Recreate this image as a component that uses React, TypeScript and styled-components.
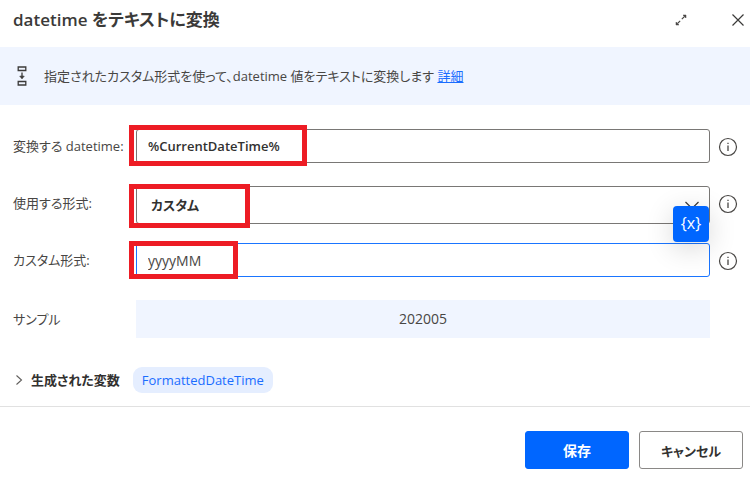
import React from "react";
import styled, { createGlobalStyle, css } from "styled-components";

const GlobalStyle = createGlobalStyle`
  *, *::before, *::after { box-sizing: border-box; }
  html, body { margin: 0; background: #fff; }
  body, button, input, select {
    font-family: "Open Sans", "Noto Sans CJK JP", sans-serif;
    font-feature-settings: "palt";
    font-size: 13px;
    color: #484644;
  }
  button { cursor: pointer; }
`;

const Dialog = styled.main`
  min-height: 100vh;
  background: #fff;
`;

const Header = styled.header`
  display: flex;
  align-items: center;
  justify-content: space-between;
  height: 47px;
  padding: 0 0 8px 13px;
`;

const Title = styled.h1`
  margin: 0;
  font-size: 17px;
  line-height: 26px;
  font-weight: 600;
  color: #3b3a39;
`;

const WindowActions = styled.div`
  display: flex;
  gap: 33px;
`;

const IconButton = styled.button`
  display: grid;
  place-items: center;
  width: 24px;
  height: 28px;
  padding: 0;
  border: 0;
  background: transparent;
`;

const Banner = styled.section`
  display: flex;
  align-items: center;
  gap: 16px;
  height: 58px;
  padding: 0 16px;
  background: #f0f5ff;
`;

const Description = styled.p`
  margin: 0;
  line-height: 20px;
`;

const MoreLink = styled.a`
  color: #1a6dff;
`;

const Form = styled.div`
  display: grid;
  grid-auto-rows: 57px;
  padding: 24px 12px 0 13px;
`;

const Row = styled.div`
  display: grid;
  grid-template-columns: 123px minmax(0, 1fr) 20px;
  align-items: start;
`;

const labelText = css`
  line-height: 34px;
  white-space: nowrap;
`;

const Label = styled.label`
  ${labelText}
`;

const SampleLabel = styled.span`
  ${labelText}
  line-height: 38px;
`;

const Field = styled.div`
  position: relative;
  margin-right: 8px;
`;

const TextInput = styled.input<{ $active?: boolean; $strong?: boolean }>`
  display: block;
  width: 100%;
  height: 34px;
  padding: 0 11px;
  border: 1px solid ${(p) => (p.$active ? "#1a75ff" : "#797775")};
  border-radius: 3px;
  background: transparent;
  color: ${(p) => (p.$strong ? "#323130" : "#484644")};
  font-size: ${(p) => (p.$strong ? 13 : 14)}px;
  font-weight: ${(p) => (p.$strong ? 600 : 400)};
  outline: none;
`;

const Select = styled.select`
  display: block;
  width: 100%;
  height: 38px;
  padding: 0 36px 0 14px;
  border: 1px solid #797775;
  border-radius: 3px;
  background: #fff;
  color: #323130;
  font-weight: 600;
  appearance: none;
  outline: none;
`;

const SelectArrow = styled.svg`
  position: absolute;
  top: 15px;
  right: 11px;
  pointer-events: none;
`;

const Highlight = styled.span<{ $top: number; $width: number; $height: number }>`
  position: absolute;
  left: -7px;
  top: ${(p) => p.$top}px;
  width: ${(p) => p.$width}px;
  height: ${(p) => p.$height}px;
  border: 5px solid #ed1c24;
  pointer-events: none;
`;

const VariableButton = styled.button`
  position: absolute;
  right: 1px;
  bottom: 35px;
  width: 36px;
  height: 36px;
  padding: 0 0 3px;
  border: 0;
  border-radius: 4px;
  background: #0066ff;
  color: #fff;
  font-size: 16px;
  box-shadow: 0 6px 28px rgba(0, 0, 0, 0.16);
`;

const InfoButton = styled.button`
  display: grid;
  place-items: center;
  width: 20px;
  height: 36px;
  padding: 0;
  border: 0;
  background: transparent;
`;

const Sample = styled.output`
  display: block;
  margin-right: 8px;
  background: #f0f5ff;
  font-size: 14px;
  line-height: 38px;
  text-align: center;
`;

const Produced = styled.section`
  display: flex;
  align-items: center;
  gap: 13px;
  height: 49px;
  padding: 0 13px 4px;
`;

const Disclosure = styled.button`
  display: flex;
  align-items: center;
  gap: 6px;
  padding: 0;
  border: 0;
  background: transparent;
  color: #323130;
  font-weight: 600;
  line-height: 26px;
`;

const VariableChip = styled.button`
  height: 26px;
  padding: 0 9px;
  border: 0;
  border-radius: 9px;
  background: #e5eeff;
  color: #1a6dff;
`;

const Footer = styled.footer`
  display: flex;
  justify-content: flex-end;
  gap: 10px;
  padding: 24px 7px 8px;
  border-top: 1px solid #e1e1e1;
`;

const ActionButton = styled.button<{ $primary?: boolean }>`
  width: 104px;
  height: 38px;
  padding: 0;
  border: 1px solid ${(p) => (p.$primary ? "#0066ff" : "#8a8886")};
  border-radius: 3px;
  background: ${(p) => (p.$primary ? "#0066ff" : "#fff")};
  color: ${(p) => (p.$primary ? "#fff" : "#323130")};
  font-size: ${(p) => (p.$primary ? 14 : 13)}px;
  font-weight: 600;
`;

const Info = ({ label }: { label: string }) => (
  <InfoButton type="button" aria-label={label}>
    <svg width="20" height="20" viewBox="0 0 20 20" fill="none" stroke="#484644">
      <circle cx="10" cy="10" r="8.5" strokeWidth="1.2" />
      <path d="M10 8.5V14" strokeWidth="1.3" />
      <path d="M10 5.8V7.1" strokeWidth="1.3" />
    </svg>
  </InfoButton>
);

export default function App() {
  return (
    <>
      <GlobalStyle />
      <Dialog>
        <Header>
          <Title>datetime をテキストに変換</Title>
          <WindowActions>
            <IconButton type="button" aria-label="最大化">
              <svg width="12" height="12" viewBox="0 0 12 12" fill="#484644" stroke="#484644">
                <path d="M8 1h3v3zM1 8v3h3z" strokeWidth="0.5" />
                <path d="M9.5 2.5 6.8 5.2M2.5 9.5l2.7-2.7" strokeWidth="1.1" />
              </svg>
            </IconButton>
            <IconButton type="button" aria-label="閉じる">
              <svg width="12" height="12" viewBox="0 0 12 12" fill="none" stroke="#3b3a39" strokeWidth="1.2">
                <path d="m.5.5 11 11M11.5.5l-11 11" />
              </svg>
            </IconButton>
          </WindowActions>
        </Header>

        <Banner>
          <svg width="12" height="20" viewBox="0 0 12 20" fill="none" stroke="#3b3a39" strokeWidth="1.3">
            <path d="M2.2 1h7.6v3.5H2.2zM2.2 15.5h7.6V19H2.2zM6 6.5v6" />
            <path d="m3.8 10.2 2.2 2.4 2.2-2.4z" fill="#3b3a39" strokeWidth="0.8" />
          </svg>
          <Description>
            指定されたカスタム形式を使って、datetime 値をテキストに変換します{" "}
            <MoreLink href="#details">詳細</MoreLink>
          </Description>
        </Banner>

        <Form>
          <Row>
            <Label htmlFor="source">変換する datetime:</Label>
            <Field>
              <TextInput id="source" $strong defaultValue="%CurrentDateTime%" />
              <Highlight $top={-4} $width={178} $height={41} />
            </Field>
            <Info label="変換する datetime の情報" />
          </Row>
          <Row>
            <Label htmlFor="format">使用する形式:</Label>
            <Field>
              <Select id="format" defaultValue="custom">
                <option value="custom">カスタム</option>
              </Select>
              <SelectArrow width="14" height="9" viewBox="0 0 14 9" fill="none" stroke="#3b3a39" strokeWidth="1.2">
                <path d="m.5 1 6.5 6.5L13.5 1" />
              </SelectArrow>
              <Highlight $top={-2} $width={121} $height={44} />
            </Field>
            <Info label="使用する形式の情報" />
          </Row>
          <Row>
            <Label htmlFor="custom">カスタム形式:</Label>
            <Field>
              <TextInput id="custom" $active defaultValue="yyyyMM" />
              <Highlight $top={-2} $width={109} $height={38} />
              <VariableButton type="button" aria-label="変数の選択">{"{x}"}</VariableButton>
            </Field>
            <Info label="カスタム形式の情報" />
          </Row>
          <Row>
            <SampleLabel id="sample-label">サンプル</SampleLabel>
            <Sample aria-labelledby="sample-label">202005</Sample>
          </Row>
        </Form>

        <Produced>
          <Disclosure type="button" aria-expanded={false}>
            <svg width="12" height="12" viewBox="0 0 12 12" fill="none" stroke="#605e5c" strokeWidth="1.1">
              <path d="m3.5 1.5 5 4.5-5 4.5" />
            </svg>
            生成された変数
          </Disclosure>
          <VariableChip type="button">FormattedDateTime</VariableChip>
        </Produced>

        <Footer>
          <ActionButton type="button" $primary>保存</ActionButton>
          <ActionButton type="button">キャンセル</ActionButton>
        </Footer>
      </Dialog>
    </>
  );
}
